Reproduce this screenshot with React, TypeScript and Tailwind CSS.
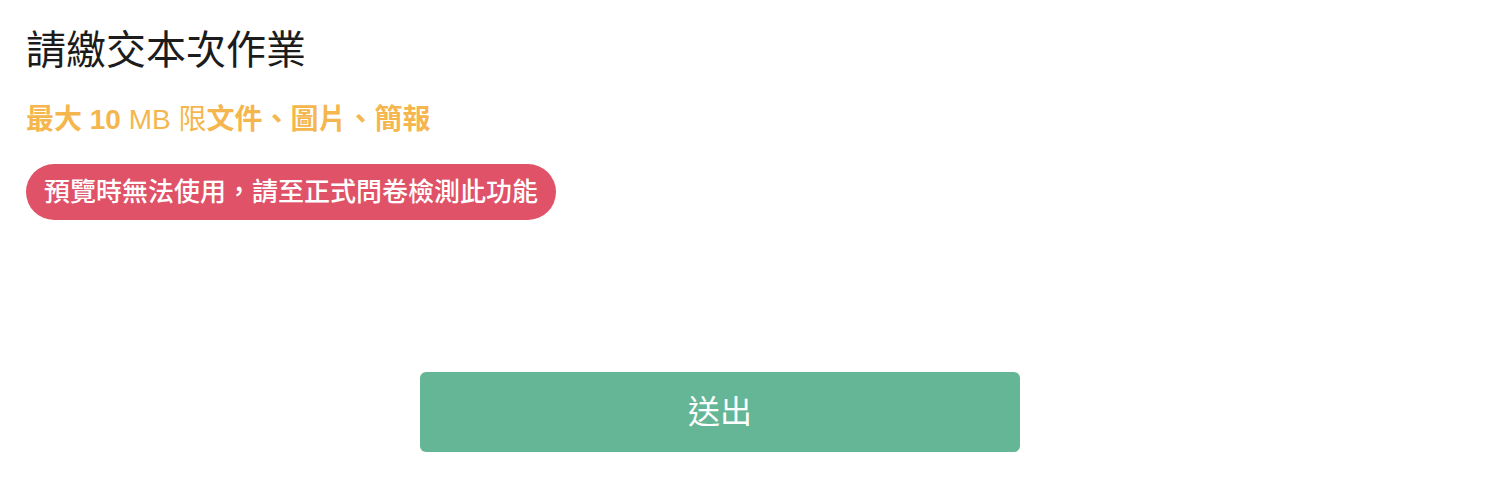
export default function App() {
  return (
    <div className="min-h-[480px] w-full bg-white font-['Liberation_Sans','Noto_Sans_CJK_TC',sans-serif]">
      <div className="w-[1440px] pl-[26px] pt-[20px]">
        <h1 className="text-[40px] leading-[60px] font-normal text-[#1c1c1c]">請繳交本次作業</h1>
        <p className="mt-5 text-[28px] leading-[40px] text-[#f5b64e]">
          <span className="font-bold">最大 10</span> MB 限<span className="font-bold">文件、圖片、簡報</span>
        </p>
        <div className="mt-6 inline-flex h-[56px] items-center rounded-full bg-[#df5267] px-[18px] text-[26px] font-medium text-white">
          預覽時無法使用，請至正式問卷檢測此功能
        </div>
      </div>
      <div className="mt-[152px] flex w-[1440px] justify-center">
        <button className="flex h-[80px] w-[600px] items-center justify-center rounded-md bg-[#64b696] text-[32px] text-white">
          送出
        </button>
      </div>
    </div>
  );
}
